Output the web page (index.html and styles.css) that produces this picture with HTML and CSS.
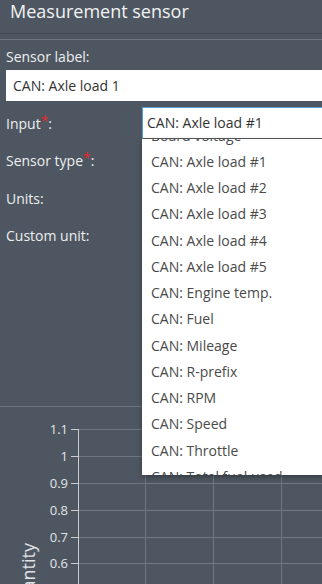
FILE: index.html
```html
<!DOCTYPE html>
<html lang="en">
<head>
  <meta charset="UTF-8">
  <title>Measurement sensor</title>
  <link rel="stylesheet" href="styles.css">
</head>
<body>

  <div class="panel">
    <div class="panel-head">Measurement sensor</div>

    <div class="panel-body">
      <label class="field-label" for="sensorLabel">Sensor label:</label>
      <input class="text-input" id="sensorLabel" type="text" value="CAN: Axle load 1">

      <div class="form-grid">
        <label class="grid-label">Input<span class="req">*</span>:</label>
        <div class="select-wrap">
          <div class="select is-open">CAN: Axle load #1</div>
          <div class="dropdown">
            <ul class="dropdown-list">
              <li>Board voltage</li>
              <li>CAN: Axle load #1</li>
              <li>CAN: Axle load #2</li>
              <li>CAN: Axle load #3</li>
              <li>CAN: Axle load #4</li>
              <li>CAN: Axle load #5</li>
              <li>CAN: Engine temp.</li>
              <li>CAN: Fuel</li>
              <li>CAN: Mileage</li>
              <li>CAN: R-prefix</li>
              <li>CAN: RPM</li>
              <li>CAN: Speed</li>
              <li>CAN: Throttle</li>
              <li>CAN: Total fuel used</li>
              <li>CAN: Weight</li>
            </ul>
          </div>
        </div>

        <label class="grid-label">Sensor type<span class="req">*</span>:</label>
        <div class="select"></div>

        <label class="grid-label">Units:</label>
        <div class="select"></div>

        <label class="grid-label">Custom unit:</label>
        <input class="text-input small" type="text">
      </div>
    </div>

    <div class="chart">
      <svg width="322" height="177" viewBox="0 0 322 177">
        <!-- grid -->
        <g class="grid-lines">
          <line x1="78" y1="22.5" x2="322" y2="22.5"/>
          <line x1="78" y1="49.5" x2="322" y2="49.5"/>
          <line x1="78" y1="76.5" x2="322" y2="76.5"/>
          <line x1="78" y1="103.5" x2="322" y2="103.5"/>
          <line x1="78" y1="130.5" x2="322" y2="130.5"/>
          <line x1="78" y1="156.5" x2="322" y2="156.5"/>
          <line x1="145.5" y1="22" x2="145.5" y2="177"/>
          <line x1="213.5" y1="22" x2="213.5" y2="177"/>
          <line x1="281.5" y1="22" x2="281.5" y2="177"/>
        </g>
        <!-- axis -->
        <g class="axis">
          <line x1="78.5" y1="22" x2="78.5" y2="177"/>
          <line x1="71" y1="22.5" x2="78" y2="22.5"/>
          <line x1="71" y1="49.5" x2="78" y2="49.5"/>
          <line x1="71" y1="76.5" x2="78" y2="76.5"/>
          <line x1="71" y1="103.5" x2="78" y2="103.5"/>
          <line x1="71" y1="130.5" x2="78" y2="130.5"/>
          <line x1="71" y1="156.5" x2="78" y2="156.5"/>
        </g>
        <g class="tick-labels">
          <text x="68" y="27">1.1</text>
          <text x="68" y="54">1</text>
          <text x="68" y="81">0.9</text>
          <text x="68" y="108">0.8</text>
          <text x="68" y="135">0.7</text>
          <text x="68" y="161">0.6</text>
        </g>
        <text class="axis-title" transform="translate(35 136) rotate(-90)">Quantity</text>
      </svg>
    </div>
  </div>

</body>
</html>
```

FILE: styles.css
```css
/* colours */
:root{
  --pageBg: #4e5761;
  --lineLight: #6e767f;
  --headBorder: #444c55;
  --labelColor: #eceef0;
  --inputText: #333;
  --listText: #4a4a4a;
  --focusBorder: #4ea3dc;
  --required: #e3262b;
}

* {
  box-sizing: border-box;
  font-family: "Open Sans", sans-serif;
}
body {
  margin: 0;
  width: 322px;
  height: 584px;
  overflow: hidden;
  background: var(--pageBg);
}

/*  Header  */
.panel-head {
  height: 34px;
  padding: 0 10px;
  font-size: 18px;
  line-height: 22px;
  color: #f1f2f3;
  border-bottom: 1px solid var(--headBorder);
}

/*  Form  */
.panel-body {
  height: 367px;
  margin-top: 5px;
  padding: 7px 0 0 6px;
  border-top: 1px solid var(--lineLight);
}
.field-label,
.grid-label {
  display: block;
  font-size: 14px;
  line-height: 20px;
  color: var(--labelColor);
}
.text-input {
  display: block;
  width: 316px;
  height: 31px;
  margin-top: 3px;
  padding: 0 7px;
  border: none;
  outline: none;
  background: #fff;
  font-size: 14px;
  color: var(--inputText);
}
.form-grid {
  display: grid;
  grid-template-columns: 136px 180px;
  grid-auto-rows: 32px;
  row-gap: 5.5px;
  align-items: center;
  margin-top: 6px;
}
.grid-label {
  padding-top: 1px;
}
.req {
  color: var(--required);
  position: relative;
  top: -3px;
}
.text-input.small {
  width: 180px;
  margin: 0;
}

/*  Select + dropdown  */
.select-wrap {
  position: relative;
  height: 32px;
}
.select {
  height: 32px;
  padding: 0 4px;
  background: #fff;
  border: 1px solid #fff;
  border-right: none;
  font-size: 14px;
  line-height: 29px;
  color: var(--inputText);
}
.select.is-open {
  border-color: var(--focusBorder);
  border-bottom-color: #55595e;
}
.dropdown {
  position: absolute;
  top: 32px;
  left: 0;
  width: 180px;
  height: 336px;
  overflow: hidden;
  background: #fff;
  box-shadow: 0 2px 5px rgba(0,0,0,0.35);
  z-index: 10;
}
.dropdown-list {
  list-style: none;
  margin: -16.4px 0 0;
  padding: 0;
}
.dropdown-list li {
  height: 26.25px;
  padding-left: 9px;
  font-size: 14px;
  line-height: 26.25px;
  color: var(--listText);
  white-space: nowrap;
}

/*  Chart  */
.chart {
  height: 178px;
  border-top: 1px solid var(--lineLight);
}
.chart svg {
  display: block;
}
.grid-lines line {
  stroke: #6f7780;
  stroke-width: 1;
}
.axis line {
  stroke: #c9cdd1;
  stroke-width: 1;
}
.tick-labels text {
  font-size: 13px;
  fill: #e1e4e7;
  text-anchor: end;
}
.axis-title {
  font-size: 18px;
  fill: #e1e4e7;
  text-anchor: end;
}
```
